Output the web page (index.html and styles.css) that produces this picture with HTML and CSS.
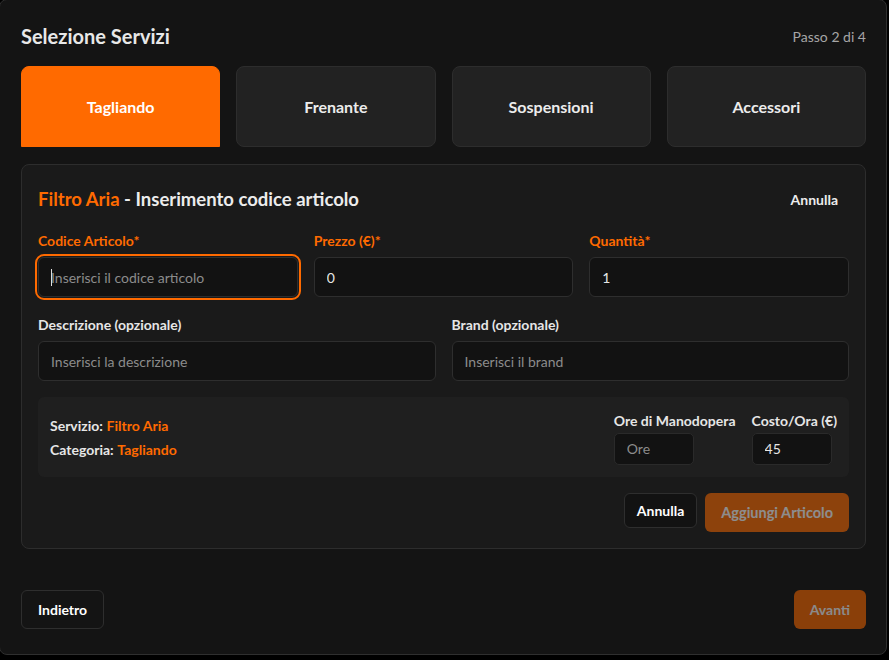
FILE: index.html
```html
<!DOCTYPE html>
<html lang="it">
<head>
<meta charset="utf-8">
<title>Selezione Servizi</title>
<link rel="stylesheet" href="styles.css">
</head>
<body>
<div class="panel">
  <div class="panel-head">
    <h1 class="title">Selezione Servizi</h1>
    <span class="step">Passo 2 di 4</span>
  </div>

  <div class="tabs">
    <button class="tab tab-active">Tagliando</button>
    <button class="tab">Frenante</button>
    <button class="tab">Sospensioni</button>
    <button class="tab">Accessori</button>
  </div>

  <div class="card">
    <div class="card-head">
      <h2 class="card-title"><span class="accent">Filtro Aria</span> - Inserimento codice articolo</h2>
      <button class="ghost-btn">Annulla</button>
    </div>

    <div class="grid-3">
      <div class="field">
        <label class="label label-req">Codice Articolo*</label>
        <div class="input-wrap">
          <input class="input input-focus" type="text" placeholder="Inserisci il codice articolo">
          <span class="caret"></span>
        </div>
      </div>
      <div class="field">
        <label class="label label-req">Prezzo (€)*</label>
        <input class="input" type="text" value="0">
      </div>
      <div class="field">
        <label class="label label-req">Quantità*</label>
        <input class="input" type="text" value="1">
      </div>
    </div>

    <div class="grid-2">
      <div class="field">
        <label class="label">Descrizione (opzionale)</label>
        <input class="input" type="text" placeholder="Inserisci la descrizione">
      </div>
      <div class="field">
        <label class="label">Brand (opzionale)</label>
        <input class="input" type="text" placeholder="Inserisci il brand">
      </div>
    </div>

    <div class="info">
      <div class="info-left">
        <div class="info-line"><b>Servizio:</b> <span class="accent">Filtro Aria</span></div>
        <div class="info-line"><b>Categoria:</b> <span class="accent">Tagliando</span></div>
      </div>
      <div class="info-right">
        <div class="mini-field">
          <label class="mini-label">Ore di Manodopera</label>
          <input class="mini-input" type="text" placeholder="Ore">
        </div>
        <div class="mini-field">
          <label class="mini-label">Costo/Ora (€)</label>
          <input class="mini-input" type="text" value="45">
        </div>
      </div>
    </div>

    <div class="actions">
      <button class="btn-outline btn-small">Annulla</button>
      <button class="btn-primary btn-disabled btn-add">Aggiungi Articolo</button>
    </div>
  </div>

  <div class="footer">
    <button class="btn-outline btn-footer">Indietro</button>
    <button class="btn-primary btn-disabled btn-footer">Avanti</button>
  </div>
</div>
</body>
</html>
```

FILE: styles.css
```css
* {
  box-sizing: border-box;
}

html, body {
  margin: 0;
  background: #000;
  font-family: Lato, "Open Sans", sans-serif;
  color: #ececec;
}

.panel {
  margin: -1px 0 0 -1px;
  width: 888px;
  height: 656px;
  background: #141414;
  border: 1px solid #2f2f2f;
  border-radius: 8px;
  padding: 19px 20px 0 21px;
}

.panel-head {
  height: 34px;
  margin-bottom: 13px;
  display: flex;
  align-items: center;
  justify-content: space-between;
}

.title {
  margin: 0;
  font-size: 20px;
  font-weight: 700;
  color: #e8e8e8;
}

.step {
  font-size: 14px;
  color: #a6a6a6;
}

.tabs {
  display: grid;
  grid-template-columns: repeat(4, 1fr);
  gap: 16px;
}

.tab {
  height: 81px;
  background: #222;
  border: 1px solid #2d2d2d;
  border-radius: 8px;
  font-family: inherit;
  font-size: 16px;
  font-weight: 700;
  color: #ececec;
}

.tab-active {
  background: #ff6a00;
  border-color: #ff6a00;
  border-radius: 8px 8px 0 0;
  color: #fff;
}

.card {
  margin-top: 17px;
  background: #1a1a1a;
  border: 1px solid #2d2d2d;
  border-radius: 8px;
  padding: 16px;
}

.card-head {
  height: 36px;
  display: flex;
  align-items: center;
  justify-content: space-between;
  margin-bottom: 14px;
}

.card-title {
  margin: 0;
  font-size: 18.5px;
  font-weight: 700;
  color: #ececec;
}

.accent {
  color: #ff6a00;
}

.ghost-btn {
  background: none;
  border: none;
  padding: 8px 11px;
  font-family: inherit;
  font-size: 14px;
  font-weight: 700;
  color: #ececec;
}

.grid-3 {
  display: grid;
  grid-template-columns: repeat(3, 1fr);
  gap: 16px;
}

.grid-2 {
  margin-top: 18px;
  display: grid;
  grid-template-columns: repeat(2, 1fr);
  gap: 16px;
}

.field {
  display: flex;
  flex-direction: column;
}

.label {
  font-size: 14px;
  font-weight: 700;
  line-height: 20px;
  margin-bottom: 6px;
  color: #e6e6e6;
}

.label-req {
  color: #ff6a00;
}

.input-wrap {
  position: relative;
}

.input {
  width: 100%;
  height: 40px;
  background: #121212;
  border: 1px solid #2e2e2e;
  border-radius: 6px;
  padding: 0 12px;
  font-family: inherit;
  font-size: 14px;
  color: #e6e6e6;
  outline: none;
}

.input::placeholder,
.mini-input::placeholder {
  color: #8c8c8c;
}

.input-focus {
  outline: 2px solid #ff6a00;
  outline-offset: 1px;
}

.caret {
  position: absolute;
  left: 13px;
  top: 12px;
  width: 1px;
  height: 17px;
  background: #e0e0e0;
}

.info {
  margin-top: 16px;
  height: 80px;
  background: #1f1f1f;
  border-radius: 6px;
  padding: 13px 12px 12px;
  display: flex;
  align-items: center;
  justify-content: space-between;
}

.info-line {
  font-size: 14px;
  line-height: 24px;
  color: #e6e6e6;
}

.info-line b {
  font-weight: 700;
}

.info-line .accent {
  font-weight: 700;
}

.info-right {
  display: flex;
  gap: 16px;
}

.mini-field {
  display: flex;
  flex-direction: column;
  gap: 2px;
}

.mini-label {
  font-size: 14px;
  font-weight: 700;
  line-height: 20px;
  color: #e6e6e6;
}

.mini-input {
  width: 80px;
  height: 32px;
  background: #121212;
  border: 1px solid #2a2a2a;
  border-radius: 5px;
  padding: 0 12px;
  font-family: inherit;
  font-size: 14px;
  color: #e6e6e6;
  outline: none;
}

.actions {
  margin-top: 16px;
  display: flex;
  justify-content: flex-end;
  align-items: flex-start;
  gap: 8px;
}

.btn-outline {
  background: #121212;
  border: 1px solid #2e2e2e;
  border-radius: 6px;
  font-family: inherit;
  font-size: 14px;
  font-weight: 700;
  color: #fff;
}

.btn-primary {
  background: #ff6a00;
  border: none;
  border-radius: 6px;
  font-family: inherit;
  font-size: 14px;
  font-weight: 700;
  color: #fff;
}

.btn-disabled {
  opacity: 0.5;
}

.btn-small {
  height: 35px;
  padding: 0 12px;
}

.btn-add {
  height: 39px;
  padding: 0 16px;
  font-size: 14.5px;
}

.footer {
  margin-top: 41px;
  display: flex;
  justify-content: space-between;
}

.btn-footer {
  height: 39px;
  padding: 0 16px;
}

.footer .btn-outline {
  background: transparent;
}
```
